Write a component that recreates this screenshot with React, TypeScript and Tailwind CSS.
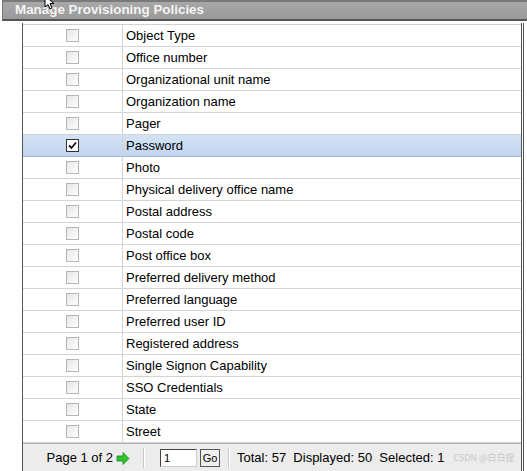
const ROWS = [
  "Object Type",
  "Office number",
  "Organizational unit name",
  "Organization name",
  "Pager",
  "Password",
  "Photo",
  "Physical delivery office name",
  "Postal address",
  "Postal code",
  "Post office box",
  "Preferred delivery method",
  "Preferred language",
  "Preferred user ID",
  "Registered address",
  "Single Signon Capability",
  "SSO Credentials",
  "State",
  "Street",
];

function Checkbox({ checked }: { checked: boolean }) {
  return (
    <div
      className={`flex h-[13px] w-[13px] items-center justify-center border ${
        checked ? "border-[#333] bg-white" : "border-[#b5b5b5] bg-gradient-to-br from-[#e6e6e6] to-white"
      }`}
    >
      {checked && (
        <svg width="9" height="9" viewBox="0 0 9 9">
          <path d="M1 4.5 L3.5 7 L8 1.5" fill="none" stroke="#111" strokeWidth="1.8" />
        </svg>
      )}
    </div>
  );
}

export default function App() {
  return (
    <div className="relative h-[471px] w-[527px] overflow-hidden bg-white font-['Liberation_Sans',Arial,sans-serif] text-[13px] text-black">
      <div className="ml-[2px] flex h-[21px] items-center border-t-2 border-l border-b-2 border-t-[#7a7a7a] border-l-[#7a7a7a] border-b-[#555] bg-gradient-to-b from-[#a8a8a8] to-[#9a9a9a] pl-[12px] text-[13.4px] font-bold text-[#f4f4f4]">
        Manage Provisioning Policies
      </div>
      <svg className="absolute left-[44px] top-[-4px]" width="12" height="14" viewBox="0 0 12 14">
        <path d="M1 0 L1 11 L4 8.5 L6 13 L8 12 L6 7.5 L10 7.5 Z" fill="white" stroke="black" strokeWidth="1" />
      </svg>
      <div className="ml-[22px] mt-[2px] w-[502px] border-l border-r-[3px] border-l-[#555] border-r-[#555] [border-right-style:double]">
        <div className="h-[2px] border-b border-[#d0d0d0]" />
        {ROWS.map((name) => {
          const selected = name === "Password";
          return (
            <div
              key={name}
              className={`flex h-[22px] items-center border-b ${
                selected
                  ? "border-[#9db8d8] bg-gradient-to-b from-[#d4e3f4] to-[#c0d5ee]"
                  : "border-[#d4d4d4]"
              }`}
            >
              <div className="flex h-full w-[100px] items-center justify-center border-r border-[#d4d4d4] pr-[1px]">
                <Checkbox checked={selected} />
              </div>
              <div className="pl-[3px]">{name}</div>
            </div>
          );
        })}
        <div className="flex h-[29px] items-center border-t border-[#b0b0b0] bg-[#ececec] text-[13px]">
          <div className="flex w-[107px] items-center justify-end gap-[3px]">
            <span>Page 1 of 2</span>
            <svg width="14" height="13" viewBox="0 0 14 13">
              <path d="M1 4 L7 4 L7 0.5 L13 6.5 L7 12.5 L7 9 L1 9 Z" fill="#2fc42f" stroke="#1a8a1a" strokeWidth="0.8" />
            </svg>
          </div>
          <div className="ml-[13px] h-[20px] w-0 border-l border-r border-l-[#c8c8c8] border-r-white" />
          <div className="ml-[15px] flex items-center gap-[3px]">
            <div className="flex h-[18px] w-[37px] items-center border border-[#444] border-b-[#ccc] border-r-[#ccc] bg-white pl-[3px] text-[11px]">
              1
            </div>
            <div className="flex h-[18px] w-[20px] items-center justify-center border border-[#555] bg-[#f0f0f0] text-[11px]">
              Go
            </div>
          </div>
          <div className="ml-[8px] h-[20px] w-0 border-l border-r border-l-[#c8c8c8] border-r-white" />
          <div className="ml-[7px] whitespace-pre">Total: 57  Displayed: 50  Selected: 1</div>
          <div className="ml-[9px] whitespace-nowrap font-['Noto_Sans_CJK_SC',sans-serif] text-[9px] text-[#c8c8c8]">
            CSDN @白白提
          </div>
        </div>
      </div>
    </div>
  );
}
